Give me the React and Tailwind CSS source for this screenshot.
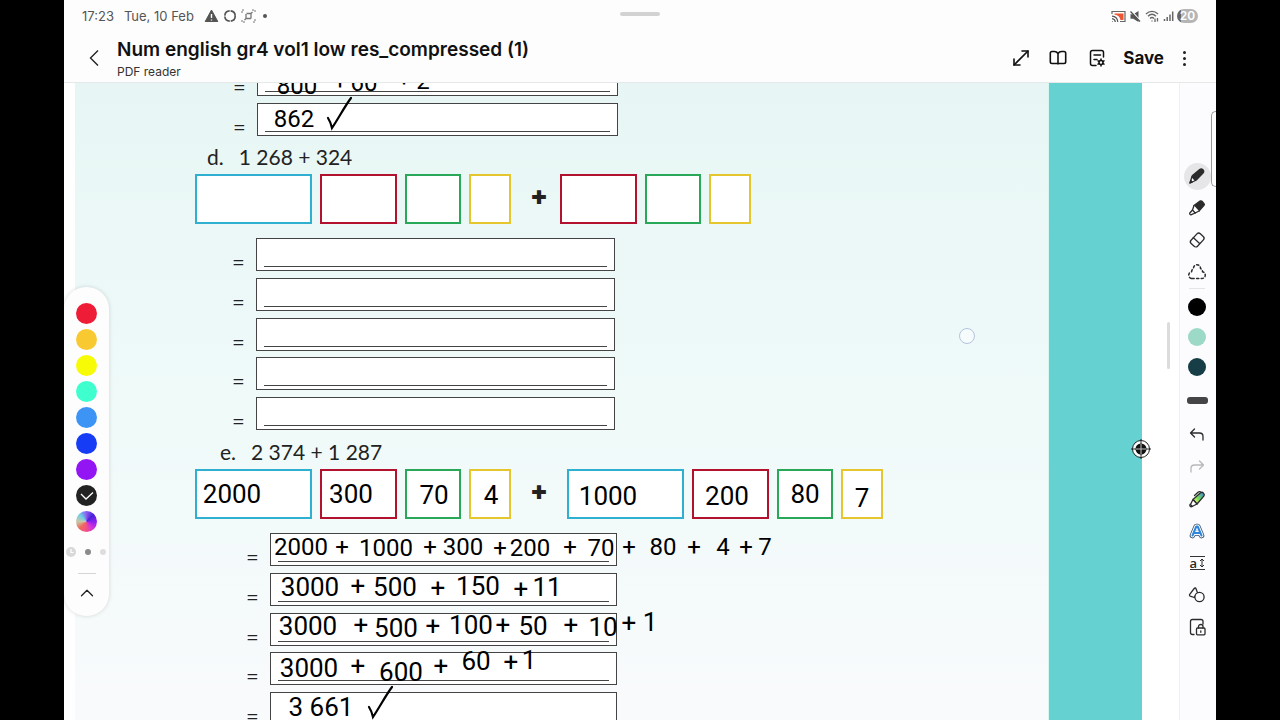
import React from "react";
import { ChevronUp, MoveDiagonal } from "lucide-react";

const swatches = [
  { name: "Red", tone: "bg-[#ee1c36]" },
  { name: "Amber", tone: "bg-[#f9c932]" },
  { name: "Yellow", tone: "bg-[#f7fb05]" },
  { name: "Mint", tone: "bg-[#40ffcf]" },
  { name: "Sky", tone: "bg-[#3e94f4]" },
  { name: "Blue", tone: "bg-[#163cf6]" },
  { name: "Purple", tone: "bg-[#9415f3]" },
];

const penColors = [
  { name: "Black pen", tone: "bg-black" },
  { name: "Mint pen", tone: "bg-[#9cd9c6]" },
  { name: "Dark teal pen", tone: "bg-[#173e47]" },
];

// handwritten notes, placed by their centre on the sheet
const smallInk = [
  ["800", 222, 3], ["+", 265, -2], ["60", 289, 0], ["+", 329, -5], ["2", 348, -2],
  ["862", 219, 36],
  ["2000", 226, 464], ["+", 267, 464], ["1000", 311, 465], ["+", 355, 464], ["300", 388, 464],
  ["+", 425, 465], ["200", 455, 465], ["+", 495, 464], ["70", 526, 465], ["+", 554, 464],
  ["80", 588, 464], ["+", 619, 464], ["4", 648, 464], ["+", 671, 464], ["7", 690, 464],
];

const largeInk = [
  ["2000", 157, 411], ["300", 276, 411], ["70", 359, 412], ["4", 416, 412],
  ["1000", 533, 413], ["200", 652, 413], ["80", 730, 411], ["7", 787, 415],
  ["3000", 235, 504], ["+", 283, 503], ["500", 320, 504], ["+", 363, 505], ["150", 403, 503],
  ["+", 446, 506], ["11", 472, 504],
  ["3000", 233, 543], ["+", 286, 542], ["500", 321, 545], ["+", 358, 543], ["100", 396, 542],
  ["+", 428, 542], ["50", 458, 543], ["+", 496, 542], ["10", 528, 544], ["+", 554, 540], ["1", 575, 539],
  ["3000", 234, 585], ["+", 283, 583], ["600", 326, 589], ["+", 366, 583], ["60", 401, 578],
  ["+", 436, 579], ["1", 454, 577],
  ["3 661", 246, 624],
];

const ticks = [
  { left: 251, top: 13 },
  { left: 292, top: 602 },
];

const Glyph = ({ children, size = 20 }) => (
  <svg
    width={size}
    height={size}
    viewBox="0 0 20 20"
    fill="none"
    stroke="currentColor"
    strokeWidth="1.3"
    strokeLinecap="round"
    strokeLinejoin="round"
    aria-hidden="true"
  >
    {children}
  </svg>
);

const tools = [
  {
    name: "Pen",
    active: true,
    icon: (
      <Glyph>
        <path d="M3 17l2-6.5 3.5 4z" fill="white" />
        <path d="M3 17l.8-2.6 1.4 1.7z" fill="currentColor" />
        <path d="M5.5 9.5l7.2-6c1.2-.9 2.2-.7 3.2.3 1 1.1 1.1 2.2.1 3.2l-6.5 6.8c-.6.6-1 .6-1.5.1L5.4 11c-.4-.5-.4-1 .1-1.5z" fill="currentColor" />
      </Glyph>
    ),
  },
  {
    name: "Highlighter",
    icon: (
      <Glyph>
        <path d="M7 7.5l6-4.4c.8-.5 1.4-.4 2 .2l2 2.3c.5.6.5 1.200 0 1.800L12 13z" fill="currentColor" />
        <path d="M7 7.5L5.5 12l2.7 3L12 13" fill="white" />
        <path d="M5.5 12l-2.7 3c-.5.9.5 2.200 1.600 1.700L8.200 15" />
      </Glyph>
    ),
  },
  {
    name: "Eraser",
    icon: (
      <Glyph>
        <rect x="3.4" y="5.800" width="13.400" height="8.800" rx="2.400" transform="rotate(-47 10 10)" />
        <path d="M6.200 7.600l6.400 5.900" />
      </Glyph>
    ),
  },
  {
    name: "Lasso",
    icon: (
      <Glyph>
        <path
          d="M5 16.500h10c4 0 4.500-6 .5-6.800C15.500 7 14 7 13.500 6.500 13.500 1.500 6.500 1.500 6.500 6.500 5.500 7 5 7.500 4.600 9.700.5 10.500 1 16.500 5 16.500z"
          strokeWidth="1.500"
          strokeDasharray="2.200 2.400"
        />
      </Glyph>
    ),
  },
];

const actions = [
  {
    name: "Undo",
    icon: (
      <Glyph>
        <path d="M7.500 4L3.500 8l4 4M3.500 8h9c2.400 0 3.500 1.200 3.500 3.500V15" />
      </Glyph>
    ),
  },
  {
    name: "Redo",
    muted: true,
    icon: (
      <Glyph>
        <path d="M12.500 4l4 4-4 4M16.500 8h-9C5.100 8 4 9.200 4 11.500V15" />
      </Glyph>
    ),
  },
  {
    name: "Pen styles",
    icon: (
      <Glyph>
        <defs>
          <linearGradient id="penBody" x1="0" y1="1" x2="1" y2="0">
            <stop offset="0.1" stopColor="#f4f76b" />
            <stop offset="0.500" stopColor="#6ddb5d" />
            <stop offset="1" stopColor="#3c77e8" />
          </linearGradient>
        </defs>
        <path d="M6 10.500l7.500-6.700c2-1.600 4.900 1.300 3.300 3.300L10 15z" fill="url(#penBody)" />
        <path d="M6 10.500l-2.500 5 1.600 2L10 15z" fill="white" />
        <path d="M3.300 15.300c-1.300 1.200.2 3.100 1.700 2.200M7.500 6.500L11 3.200c.8-.6 1.600-.7 2.400-.4" />
      </Glyph>
    ),
  },
  {
    name: "Text to shape",
    icon: (
      <svg width="20" height="20" viewBox="0 0 20 20" fill="none" strokeLinecap="round" strokeLinejoin="round" aria-hidden="true">
        <path d="M5.500 14.500L9.300 5.500h1.400l3.800 9M7 12h6" stroke="#34506e" strokeWidth="5.600" />
        <path d="M5.500 14.500L9.300 5.500h1.400l3.800 9M7 12h6" stroke="white" strokeWidth="4" />
        <path d="M5.500 14.500L9.300 5.500h1.400l3.800 9M7 12h6" stroke="#2f86dd" strokeWidth="2" />
      </svg>
    ),
  },
  {
    name: "Text alignment",
    icon: (
      <span className="flex w-[15px] items-center justify-between border-y border-[#333] font-['Open_Sans',sans-serif] text-[13px] leading-3 font-semibold">
        a
        <svg width="6" height="10" viewBox="0 0 6 10" fill="none" stroke="currentColor" aria-hidden="true">
          <path d="M3 1v8M1 3l2-2 2 2M1 7l2 2 2-2" />
        </svg>
      </span>
    ),
  },
  {
    name: "Shapes",
    icon: (
      <Glyph>
        <path d="M7.200 3.500c.6-.8 1.500-.6 1.800.2l1.600 4.200-3.400 4.600-4-1.400c-.7-.3-.9-1-.5-1.700z" />
        <circle cx="12.500" cy="12" r="4.600" fill="#fcfcfe" />
      </Glyph>
    ),
  },
  {
    name: "Lock page",
    icon: (
      <Glyph>
        <path d="M16 7V4.500C16 3.200 15.300 2.500 14 2.500H5.500C4.200 2.500 3.500 3.200 3.500 4.500v11c0 1.300.7 2 2 2H7" />
        <rect x="9.500" y="11" width="8.500" height="6.800" rx="1" />
        <path d="M11.500 11V9.500c0-2.700 4.500-2.700 4.500 0V11M13.800 14v1.300" />
      </Glyph>
    ),
  },
];

const StatusBar = () => (
  <div className="grid h-8 grid-cols-3 items-center px-[18px] text-[#555]">
    <div className="flex items-center gap-[10px] font-['Inter',sans-serif] text-[13px] leading-4">
      <span>17:23</span>
      <span>Tue, 10 Feb</span>
      <div className="flex items-center gap-1">
        <svg width="15" height="14" viewBox="0 0 15 14" aria-hidden="true">
          <path d="M7.500 1l6.300 11.500H1.200z" fill="#555" stroke="#555" strokeLinejoin="round" />
          <path d="M7.500 5v4M7.500 10.500v1" stroke="white" strokeWidth="1.400" />
        </svg>
        <svg width="14" height="14" viewBox="0 0 14 14" fill="none" stroke="#555" strokeWidth="1.700" aria-hidden="true">
          <circle cx="7" cy="7" r="5.200" strokeDasharray="7.200 0.970" />
        </svg>
        <svg width="15" height="14" viewBox="0 0 15 14" fill="none" stroke="#777" aria-hidden="true">
          <path d="M1 4V1h3M11 1h3v3M14 10v3h-3M4 13H1v-3" strokeDasharray="2 1" />
          <path d="M5 5v4.500h5M5.500 4.500h4.500v5M10 4.500l1.500-1.500M5 9.500l-1.500 1.500" strokeWidth="1.300" />
        </svg>
        <span className="ml-[3px] size-1 rounded-full bg-[#555]" />
      </div>
    </div>
    <div className="-mt-1 h-1 w-10 justify-self-center rounded-full bg-[#d2d2d2]" />
    <div className="flex items-center justify-end gap-[3px]">
      <svg width="15" height="13" viewBox="0 0 15 13" fill="none" aria-hidden="true">
        <path d="M1 4V1.500h13v10H9" stroke="#666" strokeWidth="1.200" />
        <path d="M3.500 3.500h9v6.500H9.500C9 7 7 5 3.500 4.500z" fill="#ee5533" />
        <path d="M1 6.200c3.300.3 5.500 2.500 5.800 5.800M1 8.700c1.900.2 3.100 1.400 3.300 3.300M1 11.500h.6" stroke="#555" strokeWidth="1.200" />
      </svg>
      <svg width="13" height="13" viewBox="0 0 13 13" aria-hidden="true">
        <path d="M1.500 4.300h2.800L9.500 1v11L4.300 8.700H1.500z" fill="#555" />
        <path d="M2.500 1l9 10" stroke="white" strokeWidth="1.500" />
        <path d="M1.500 1.500l9.500 10" stroke="#555" strokeWidth="1.300" />
      </svg>
      <svg width="15" height="13" viewBox="0 0 15 13" fill="none" stroke="#666" strokeWidth="1.300" aria-hidden="true">
        <path d="M1 4c3.500-3.500 8.500-3.500 12 0M3 6.300c2.400-2.400 5.600-2.400 8 0M5 8.500c1.200-1.200 2.800-1.200 4 0" />
        <path d="M7 10.500v1M10 8.500v3.500M12.500 8v3.500" />
      </svg>
      <svg width="11" height="12" viewBox="0 0 11 12" stroke="#666" strokeWidth="1.500" aria-hidden="true">
        <path d="M1.500 11V9M4.200 11V7M7 11V4.500M9.700 11V1.500" />
      </svg>
      <span className="flex h-[14px] w-[21px] items-center justify-center rounded-full bg-linear-to-r from-[#666] from-20% to-[#b5b5b5] to-20% font-['Inter',sans-serif] text-[12px] leading-3 font-semibold text-white">
        20
      </span>
    </div>
  </div>
);

const TitleBar = () => (
  <div className="flex h-[50px] items-center pt-[2px] pr-[30px] pl-[22px] font-['Inter',sans-serif] text-[#111]">
    <button aria-label="Back" className="mr-4 flex w-[15px] justify-center">
      <svg width="12" height="18" viewBox="0 0 12 18" fill="none" stroke="#222" strokeWidth="1.400" aria-hidden="true">
        <path d="M10 1.500L2.500 9l7.500 7.500" />
      </svg>
    </button>
    <div className="min-w-0 flex-1 pt-1">
      <h1 className="truncate text-[19px] leading-6 font-semibold">Num english gr4 vol1 low res_compressed (1)</h1>
      <p className="text-[12px] leading-5 text-[#333]">PDF reader</p>
    </div>
    <div className="flex items-center">
      <button aria-label="Full screen" className="mr-[15px]">
        <MoveDiagonal className="size-6" strokeWidth={1.6} />
      </button>
      <button aria-label="Reading mode" className="mr-[19px]">
        <Glyph>
          <path d="M10 5.500C9 4 8 3.500 6.500 3.500H4C2.800 3.500 2.300 4 2.300 5.200v8.600c0 1.200.5 1.700 1.700 1.700h12c1.200 0 1.700-.5 1.700-1.700V5.200c0-1.200-.5-1.700-1.700-1.700h-2.500C12 3.500 11 4 10 5.500zV16" strokeWidth="1.600" />
        </Glyph>
      </button>
      <button aria-label="Document settings" className="mr-4">
        <Glyph>
          <path d="M16.500 9V4.500c0-1.400-.7-2-2-2h-9c-1.300 0-2 .6-2 2v11c0 1.400.7 2 2 2H9M7 7h6.500M7 11.500h3" strokeWidth="1.500" />
          <circle cx="14" cy="14.500" r="2" strokeWidth="1.600" />
          <path d="M14 11v1M14 17v1M11 12.800l.8.500M16.200 15.700l.8.500M11 16.200l.8-.5M16.200 13.300l.8-.5" strokeWidth="1.500" />
        </Glyph>
      </button>
      <button className="mr-[18px] text-[17px] leading-6 font-bold">Save</button>
      <button aria-label="More options" className="flex w-1 flex-col items-center gap-[3px]">
        <span className="size-[3px] rounded-full bg-[#222]" />
        <span className="size-[3px] rounded-full bg-[#222]" />
        <span className="size-[3px] rounded-full bg-[#222]" />
      </button>
    </div>
  </div>
);

const AnswerRow = ({ width }) => (
  <div className="flex h-[33px] items-end">
    <span className="w-6 text-[22px] leading-[18px]">=</span>
    <div className={`flex h-full items-end border border-[#444] bg-white px-[7px] pb-[3px] ${width}`}>
      <div className="h-px w-full bg-[#444]" />
    </div>
  </div>
);

const AnswerBlock = ({ indent, width }) => (
  <div className={`mt-[14px] flex h-[192px] flex-col justify-between ${indent}`}>
    {[0, 1, 2, 3, 4].map((row) => (
      <AnswerRow key={row} width={width} />
    ))}
  </div>
);

const cells = {
  thousands: "w-[117px] border-[#2fb0d0]",
  hundreds: "w-[77px] border-[#b3122f]",
  tens: "w-[56px] border-[#2aa85a]",
  units: "w-[42px] border-[#e6c62e]",
};

const PlaceValues = ({ left, right, plusWidth }) => (
  <div className="mt-[5px] ml-[120px] flex h-[50px] items-stretch gap-2">
    {left.map((kind) => (
      <div key={kind} className={`border-2 bg-white ${cells[kind]}`} />
    ))}
    <span className={`self-center pb-[7px] pl-[11px] font-['Inter',sans-serif] text-[26px] leading-6 font-black ${plusWidth}`}>+</span>
    {right.map((kind) => (
      <div key={kind} className={`border-2 bg-white ${cells[kind]}`} />
    ))}
  </div>
);

const InkNotes = ({ notes, size }) =>
  notes.map(([text, left, top]) => (
    <span
      key={`${left}-${top}`}
      className={`absolute -translate-x-1/2 -translate-y-1/2 font-['Roboto',sans-serif] leading-none whitespace-pre text-black ${size}`}
      style={{ left, top }}
    >
      {text}
    </span>
  ));

const InkLayer = () => (
  <div className="pointer-events-none absolute inset-0">
    <InkNotes notes={smallInk} size="text-[24px]" />
    <InkNotes notes={largeInk} size="text-[26px]" />
    {ticks.map((tick) => (
      <svg
        key={tick.top}
        width="27"
        height="35"
        viewBox="0 0 27 35"
        fill="none"
        stroke="black"
        strokeWidth="2.200"
        strokeLinecap="round"
        className="absolute"
        style={tick}
      >
        <path d="M2 22c2 3 3 6 4 10C12 23 19 10 25 2" />
      </svg>
    ))}
  </div>
);

const Sheet = () => (
  <main className="relative ml-[11px] flex min-w-0 flex-1 overflow-hidden">
    <div className="min-w-0 flex-1 border-r border-[#d5f7f0] bg-linear-to-b from-[#e7f6f4] via-[#effaf9] to-[#f9fafc] font-['Lato',sans-serif] text-[#222]">
      <div className="-mt-5 flex flex-col gap-[7px] pl-[158px]">
        <AnswerRow width="w-[361px]" />
        <AnswerRow width="w-[361px]" />
      </div>
      <h2 className="mt-[9px] ml-[132px] flex gap-[15px] text-[21px] leading-6">
        <span>d.</span>
        <span>1 268 + 324</span>
      </h2>
      <PlaceValues
        left={["thousands", "hundreds", "tens", "units"]}
        right={["hundreds", "tens", "units"]}
        plusWidth="w-[33px]"
      />
      <AnswerBlock indent="pl-[157px]" width="w-[359px]" />
      <h2 className="mt-[10px] ml-[145px] flex gap-[15px] text-[21px] leading-6">
        <span>e.</span>
        <span>2 374 + 1 287</span>
      </h2>
      <PlaceValues
        left={["thousands", "hundreds", "tens", "units"]}
        right={["thousands", "hundreds", "tens", "units"]}
        plusWidth="w-10"
      />
      <AnswerBlock indent="pl-[171px]" width="w-[347px]" />
    </div>
    <div className="w-[93px] shrink-0 bg-[#65d2d1]" />
    <InkLayer />
    <span className="absolute top-[245px] right-[167px] size-4 rounded-full border border-[#b5c3e0] bg-[#f6fbfc]" />
  </main>
);

const ColorPalette = () => (
  <aside className="absolute top-[204px] left-0 flex w-[45px] flex-col items-center rounded-[22px] bg-[#fdfdfe] pt-4 pb-3 shadow-[0_0_4px_rgba(0,0,0,0.15)]">
    <div className="flex flex-col gap-[5px]">
      {swatches.map(({ name, tone }) => (
        <button key={name} aria-label={name} className={`size-[21px] rounded-full ${tone}`} />
      ))}
      <button aria-label="Black, selected" className="flex size-[21px] items-center justify-center rounded-full bg-[#222]">
        <svg width="14" height="10" viewBox="0 0 14 10" fill="none" stroke="white" strokeWidth="1.300" aria-hidden="true">
          <path d="M1 3l5 5 7-6.500" />
        </svg>
      </button>
      <button
        aria-label="Custom colour"
        className="size-[21px] rounded-full bg-[conic-gradient(from_0deg,#8a5cf0,#4a20d8,#8a1ff0,#d030e0,#f0508a,#f06a5a,#c8c8a8,#6cd0e8,#8a5cf0)]"
      />
    </div>
    <div className="mt-[15px] flex items-center gap-[9px]">
      <svg width="10" height="10" viewBox="0 0 10 10" aria-hidden="true">
        <circle cx="5" cy="5" r="5" fill="#d8d8d8" />
        <path d="M5 2v3.500h2.500" fill="none" stroke="white" strokeWidth="1.200" />
      </svg>
      <span className="size-[6px] rounded-full bg-[#8a8a8a]" />
      <span className="mr-[2px] size-[6px] rounded-full bg-[#dedede]" />
    </div>
    <div className="mt-4 h-px w-[18px] bg-[#d5d5d5]" />
    <button aria-label="Collapse palette" className="mt-2">
      <ChevronUp className="size-[22px] text-[#222]" strokeWidth={1.4} />
    </button>
  </aside>
);

const ToolRail = () => (
  <nav className="relative flex w-[37px] flex-col items-center border-l border-[#f0f0f4] bg-[#fcfcfe] pt-[77px] pr-[2px] text-[#2b2b2b]">
    {tools.map(({ name, icon, active }) => (
      <button key={name} aria-label={name} className="flex h-8 items-center justify-center">
        <span className={`flex size-[27px] items-center justify-center rounded-full ${active ? "bg-[#e6e6e8]" : ""}`}>{icon}</span>
      </button>
    ))}
    <div className="mb-[3px] h-px w-4 bg-[#e4e4e8]" />
    {penColors.map(({ name, tone }) => (
      <button key={name} aria-label={name} className="flex h-[30px] items-center">
        <span className={`size-[18px] rounded-full ${tone}`} />
      </button>
    ))}
    <button aria-label="Line thickness" className="flex h-[37px] items-center">
      <span className="h-[7px] w-[21px] rounded-[3px] bg-[#454547]" />
    </button>
    {actions.map(({ name, icon, muted }) => (
      <button key={name} aria-label={name} className={`flex h-8 items-center justify-center ${muted ? "text-[#b8b8bc]" : ""}`}>
        {icon}
      </button>
    ))}
    <div className="absolute top-7 right-0 h-[76px] w-[5px] rounded-l-[5px] border border-r-0 border-[#999] bg-white" />
  </nav>
);

const App = () => (
  <div className="h-screen overflow-hidden bg-black px-16">
    <div className="flex h-full flex-col bg-white">
      <header className="shrink-0 border-b border-[#e6e9ea] bg-[#fdfdfd]">
        <StatusBar />
        <TitleBar />
      </header>
      <div className="relative flex min-h-0 flex-1">
        <Sheet />
        <div className="relative flex w-[37px] shrink-0 justify-end pt-[239px] pr-[9px]">
          <div className="h-[47px] w-[3px] rounded-full bg-[#dcdcdc]" />
          <svg width="20" height="20" viewBox="0 0 20 20" className="absolute top-[356px] -left-[11px]" aria-hidden="true">
            <circle cx="10" cy="10" r="8.500" fill="white" stroke="#222" />
            <circle cx="10" cy="10" r="5.500" fill="#111" />
            <path d="M0 10h20M10 0v20" stroke="#222" />
            <path d="M5 10h10M10 5v10" stroke="#bbb" />
          </svg>
        </div>
        <ToolRail />
        <ColorPalette />
      </div>
    </div>
  </div>
);

export default App;
